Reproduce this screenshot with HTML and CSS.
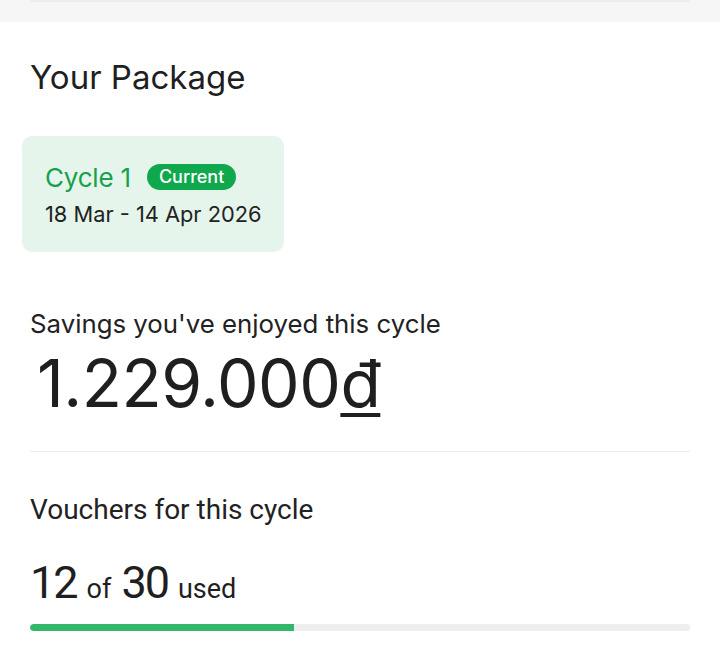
FILE: index.html
```html
<!DOCTYPE html>
<html>
<head>
<meta charset="utf-8">
<link rel="stylesheet" href="styles.css">
</head>
<body>
<div class="topband"><div class="prev-card"></div></div>
<main class="page">
  <h1 class="title">Your Package</h1>
  <div class="cycle-card">
    <div class="cycle-row">
      <span class="cycle-name">Cycle 1</span>
      <span class="pill">Current</span>
    </div>
    <div class="cycle-dates">18 Mar - 14 Apr 2026</div>
  </div>
  <section class="savings">
    <div class="label">Savings you've enjoyed this cycle</div>
    <div class="amount">1.229.000<span class="dong">đ</span></div>
  </section>
  <hr class="sep">
  <section class="vouchers">
    <div class="v-label">Vouchers for this cycle</div>
    <div class="v-count"><span class="big">12</span><span class="small">of</span><span class="big">30</span><span class="small">used</span></div>
    <div class="track"><div class="fill" style="width:40%"></div></div>
  </section>
</main>
</body>
</html>
```
FILE: styles.css
```css
* { box-sizing: border-box; }
html, body { margin: 0; padding: 0; background: #fff; }
body { font-family: Inter, "Noto Sans", sans-serif; color: #1f1f1f; width: 720px; height: 663px; overflow: hidden; }
.topband { height: 22px; background: #f6f6f6; padding: 0 22px; }
.prev-card { height: 2px; background: #ececec; border-radius: 0 0 4px 4px; margin: 0 8px; }
.page { padding: 0 30px; }
.title { margin: 0; padding-top: 35px; font-size: 33px; font-weight: 400; line-height: 40px; letter-spacing: 0; }
.cycle-card { margin-top: 39px; margin-left: -8px; width: 262px; height: 116px; background: #e5f5eb; border-radius: 10px; padding: 26px 0 0 23px; }
.cycle-row { display: flex; align-items: center; gap: 16px; height: 30px; }
.cycle-name { font-size: 26px; color: #19a04f; letter-spacing: -0.2px; }
.pill { background: #0fa84c; color: #fff; font-size: 18px; font-weight: 500; border-radius: 14px; padding: 1px 12px 2px; line-height: 23px; }
.cycle-dates { margin-top: 8px; font-size: 21.8px; line-height: 28px; color: #222; }
.savings { margin-top: 56px; }
.label { font-size: 25.8px; line-height: 32px; letter-spacing: 0; color: #222; }
.amount { margin-top: 6px; margin-left: 7px; font-size: 66px; line-height: 74px; letter-spacing: -0.5px; color: #1f1f1f; }
.dong { text-decoration: underline; text-decoration-thickness: 4px; text-underline-offset: 6px; }
.sep { border: 0; height: 1px; background: #ececec; margin: 31px 0 0; }
.vouchers { font-family: Roboto, "Noto Sans", sans-serif; }
.v-label { margin-top: 41px; font-size: 28px; line-height: 34px; color: #222; }
.v-count { margin-top: 31px; line-height: 50px; color: #1f1f1f; display: flex; align-items: baseline; gap: 10px; }
.big { font-size: 45px; letter-spacing: -2px; }
.small { font-size: 27px; }
.track { margin-top: 10px; height: 7px; background: #eeeeee; border-radius: 4px; overflow: hidden; }
.fill { height: 100%; background: #33b86b; border-radius: 4px 0 0 4px; }
```
